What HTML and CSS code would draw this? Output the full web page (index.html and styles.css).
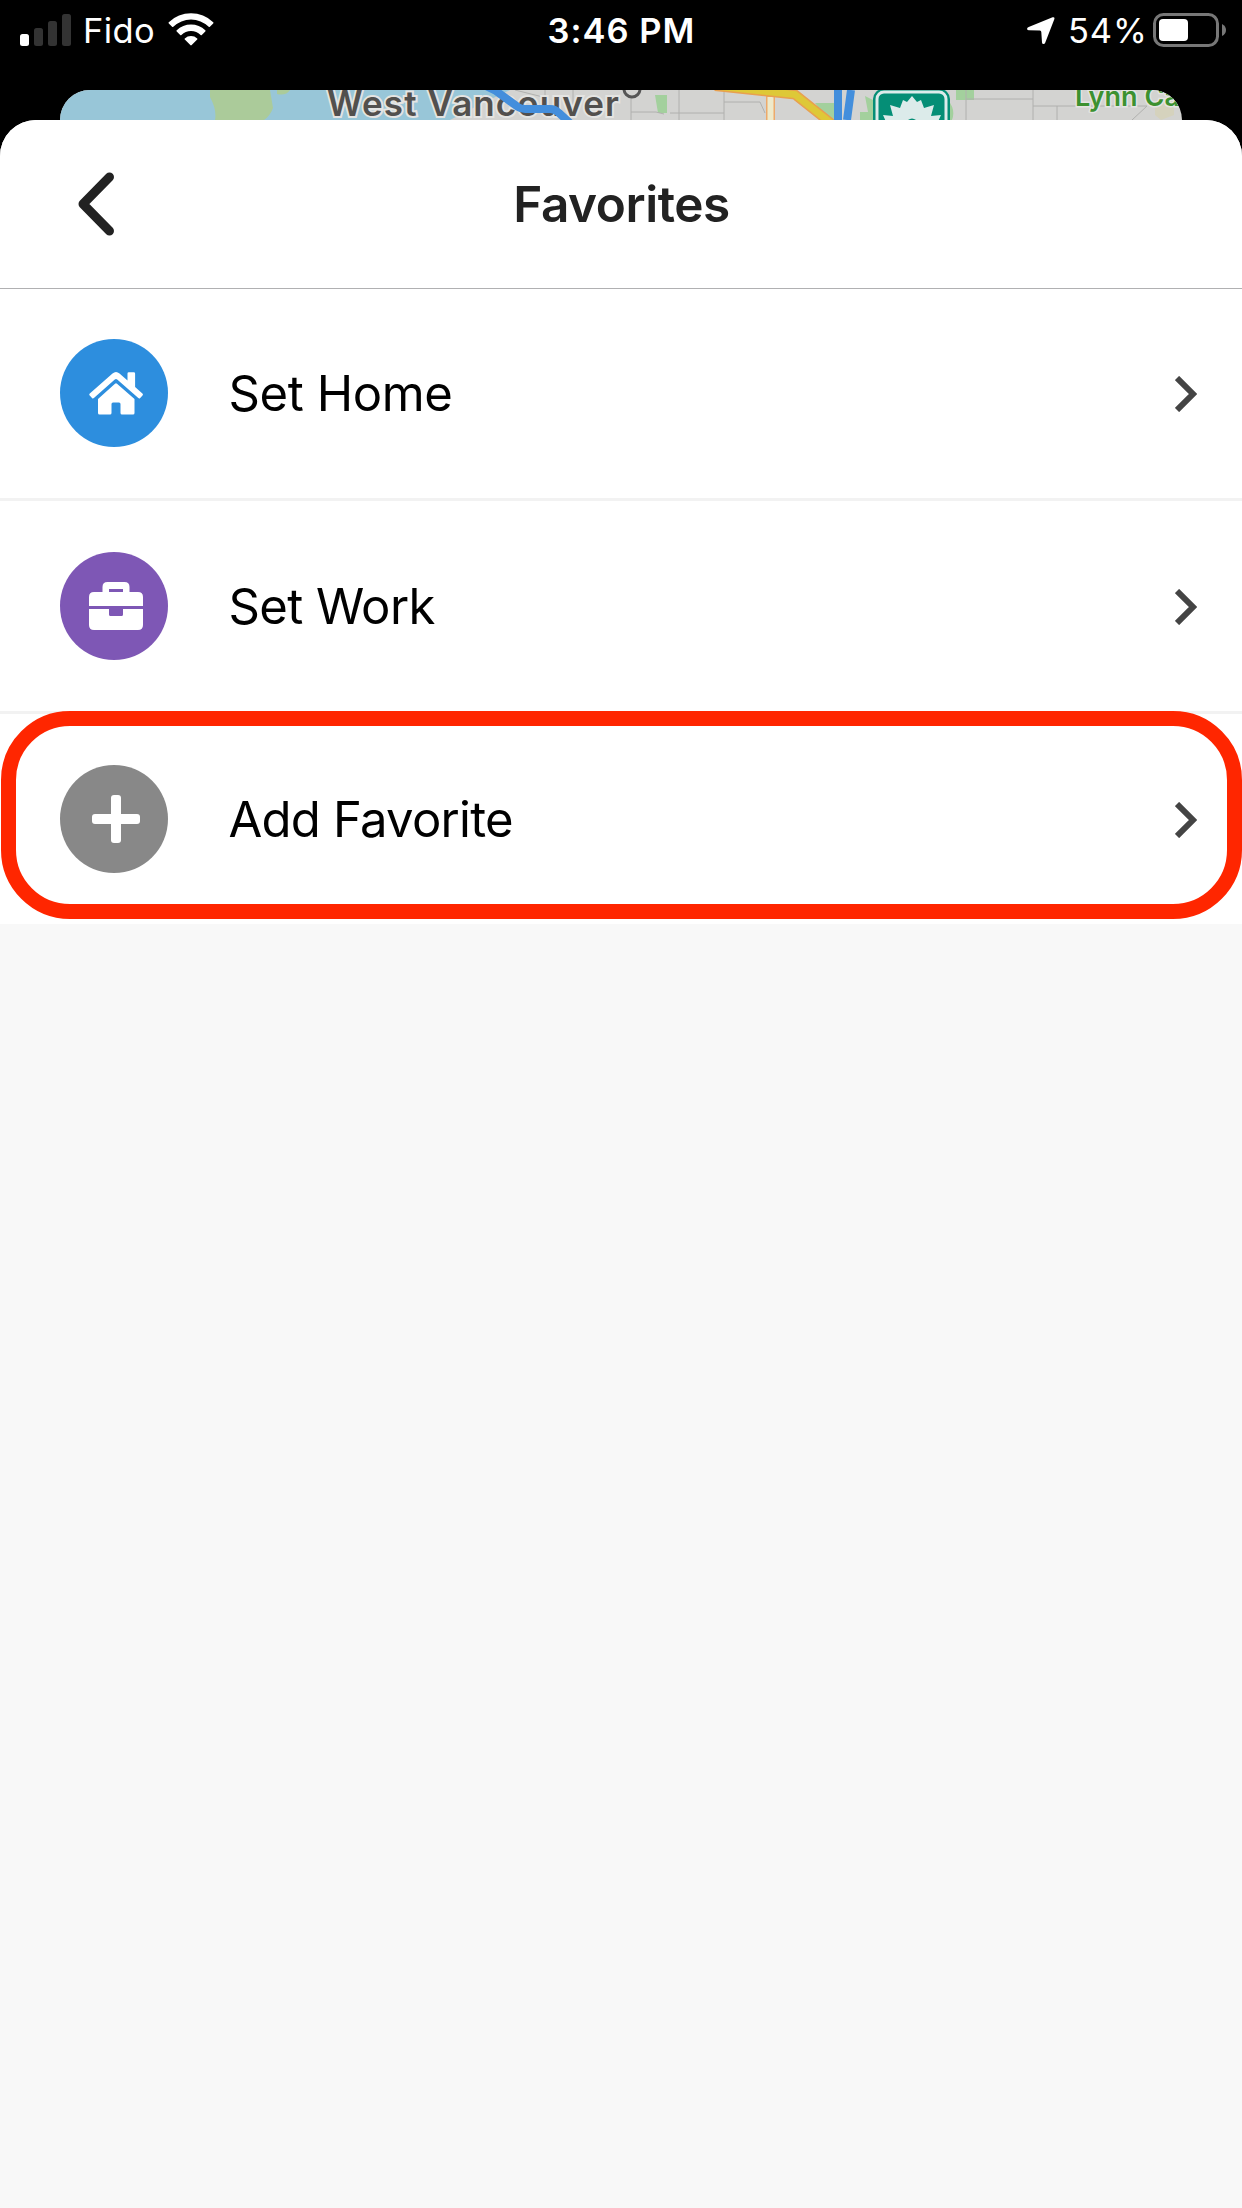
FILE: index.html
```html
<!DOCTYPE html>
<html lang="en">
<head>
<meta charset="utf-8">
<title>Favorites</title>
<link rel="stylesheet" href="styles.css">
</head>
<body>
<div class="screen">
  <div class="status">
    <div class="status-side">
      <svg class="signal" width="51" height="32" viewBox="0 0 51 32"><rect x="0" y="20" width="9" height="12" rx="2.5" fill="#fff"/><g fill="#333"><rect x="14" y="14" width="9" height="18" rx="2.5"/><rect x="28" y="7" width="9" height="25" rx="2.5"/><rect x="42" y="0" width="9" height="32" rx="2.5"/></g></svg>
      <span class="carrier">Fido</span>
      <svg class="wifi" width="46" height="34" viewBox="0 0 46 34" fill="#fff"><path d="M0.8 10.2a32 32 0 0 1 44.4 0q.6.6 0 1.2l-3.3 3.3q-.6.6-1.200 0a25.500 25.500 0 0 0-35.400 0q-.6.6-1.200 0l-3.300-3.300q-.6-.6 0-1.200z"/><path d="M8.700 18.200a20.600 20.600 0 0 1 28.600 0q.6.6 0 1.200l-3.500 3.500q-.6.6-1.200 0a14 14 0 0 0-19.200 0q-.6.6-1.200 0l-3.500-3.500q-.6-.6 0-1.200z"/><path d="M16.800 26.400a9.200 9.200 0 0 1 12.400 0q.6.6 0 1.200l-5.500 5.500q-.7.600-1.400 0l-5.500-5.500q-.6-.6 0-1.200z"/></svg>
    </div>
    <span class="time">3:46 PM</span>
    <div class="status-side status-right">
      <svg class="arrow" width="28" height="28" viewBox="0 0 28 28" fill="#fff"><path d="M25.600.3q2.400-.6 1.700 1.900L18.200 25.700q-.6 1.500-1.700 1.400-1.400 0-1.500-1.700L14.300 15q-.1-1.300-1.400-1.400L2 13.200Q.2 13.100.1 11.900 0 10.900 1.700 10.100z"/></svg>
      <span class="percent">54%</span>
      <svg class="battery" width="73" height="34" viewBox="0 0 73 34"><rect x="1.500" y="1.500" width="63" height="31" rx="9" fill="none" stroke="#777" stroke-width="3"/><rect x="6" y="6" width="29" height="22" rx="4" fill="#fff"/><path d="M69 11q4 2 4 6t-4 6z" fill="#777"/></svg>
    </div>
  </div>
  <div class="map">
    <svg width="1122" height="30" viewBox="60 90 1122 30">
      <rect x="60" y="90" width="1122" height="30" fill="#d3d3d1"/>
      <path d="M60 90H510Q478 105 450 120H60z" fill="#98c6d8"/>
      <path d="M210 90H270L273 108Q270 116 264 120H215Q217 110 210 97z" fill="#abcb9a"/>
      <path d="M277 90H290Q286 96 277 94z" fill="#abcb9a"/>
      <path d="M655 95h12v18h-9zM815 103h25v17h-12zM956 90h18v10h-18zM865 96l12 6v18h-17v-8h8zM948 100q8 10 4 20h-6z" fill="#a3d09d"/>
      <g fill="none" stroke="#b0b0ae" stroke-width="1"><path d="M515 90l32 8M545 90v14M573 90v26M631 90v30M679 90v30M724 90v30M631 112h25l8 2M670 113h54M724 102h36l5 11M966 90v30M966 99h67M1033 90v30M1033 106h24v14M1057 106h90l-15 14"/></g>
      <path d="M1155 104l19-5v16l-13 5-6-5z" fill="#d5d2bd"/>
      <g font-family="Inter, 'Liberation Sans', sans-serif">
        <text x="327" y="116" font-size="35" font-weight="600" textLength="292" fill="#52504e" stroke="#e4e4e2" stroke-width="4" paint-order="stroke">West Vancouver</text>
        <text x="1075" y="106" font-size="27" font-weight="600" textLength="105" fill="#3c9130" stroke="#e4e4e2" stroke-width="3" paint-order="stroke">Lynn Ca</text>
      </g>
      <circle cx="632" cy="89" r="8" fill="#d3d3d1" stroke="#555" stroke-width="3"/>
      <path d="M770.500 96v24" stroke="#edaa6b" stroke-width="9"/>
      <path d="M770.500 97v23" stroke="#eeeacb" stroke-width="6"/>
      <path d="M715 86l80 8.500L832 124" fill="none" stroke="#e8a04f" stroke-width="10"/>
      <path d="M715 86l80 8.500L832 124" fill="none" stroke="#dec837" stroke-width="7"/>
      <path d="M480 83l16 8 22 16q3 2 7 2h25q5 0 9 4l12 11" fill="none" stroke="#438edc" stroke-width="8"/>
      <path d="M838 90L838 120M851 90L847 120" stroke="#438edc" stroke-width="8"/>
      <rect x="873" y="89" width="77" height="44" rx="10" fill="#058e76"/>
      <rect x="877" y="92" width="69" height="44" rx="7" fill="none" stroke="#dcebea" stroke-width="3"/>
      <path d="M883 115l10 1-3-11 10 3 3-8 4 2 5-6 5 6 4-2 3 8 10-3-3 11 10-1-4 9h-50z" fill="#dcebea"/>
      <path d="M908 120q4-3 8 0z" fill="#058e76"/>
    </svg>
  </div>
  <main class="sheet">
    <header class="header">
      <svg class="back" width="36" height="64" viewBox="0 0 36 64"><path d="M31.500 5L5 32L31.500 59" fill="none" stroke="#222" stroke-width="9" stroke-linecap="round" stroke-linejoin="round"/></svg>
      <h1 class="title">Favorites</h1>
    </header>
    <ul class="list">
      <li class="row">
        <span class="badge home"><svg width="54" height="43" viewBox="0 0 54 43" fill="#fff"><path d="M.8 21.500L23.500 1.500q3.500-3 7 0L38.500 8.500V1.500Q38.500.2 39.800.2h5q1.300 0 1.300 1.300V15l7.300 6.500q1 .9.100 1.900l-2.300 2.500q-.9 1-1.900.1L28.200 7.600q-1.200-1-2.400 0L4.900 26q-1 .9-1.900-.1L.7 23.400q-.9-1 .1-1.900z"/><path d="M26 11.700q1-.9 2 0L45.500 27V41q0 1.500-1.500 1.500H33q-1.500 0-1.500-1.500V32q0-1.500-1.500-1.500h-6q-1.500 0-1.500 1.500v9q0 1.500-1.500 1.500H10.500Q9 42.500 9 41V27z"/></svg></span>
        <span class="label set-home">Set Home</span>
        <svg class="chevron" width="22" height="36" viewBox="0 0 22 36"><path d="M2 2L18 18L2 34" fill="none" stroke="#444" stroke-width="6"/></svg>
      </li>
      <li class="row">
        <span class="badge work"><svg width="54" height="48" viewBox="0 0 54 48" fill="#fff"><path fill-rule="evenodd" d="M13.500 10V5q0-5 5-5h17q5 0 5 5v5H49q5 0 5 5v9H0v-9q0-5 5-5zM20 7v3h14V7z"/><path d="M0 27h20v5.500q0 1.500 1.500 1.500h11q1.500 0 1.500-1.500V27h20v16q0 5-5 5H5q-5 0-5-5z"/></svg></span>
        <span class="label set-work">Set Work</span>
        <svg class="chevron" width="22" height="36" viewBox="0 0 22 36"><path d="M2 2L18 18L2 34" fill="none" stroke="#444" stroke-width="6"/></svg>
      </li>
      <li class="row highlighted">
        <span class="badge add"><svg width="48" height="48" viewBox="0 0 48 48" fill="#fff"><rect x="19" width="10" height="48" rx="3"/><rect y="19" width="48" height="10" rx="3"/></svg></span>
        <span class="label add-favorite">Add Favorite</span>
        <svg class="chevron" width="22" height="36" viewBox="0 0 22 36"><path d="M2 2L18 18L2 34" fill="none" stroke="#444" stroke-width="6"/></svg>
      </li>
    </ul>
  </main>
</div>
</body>
</html>
```
FILE: styles.css
```css
*, *::after { box-sizing: border-box; }
body { margin: 0; background: #000; font-family: Inter, "Liberation Sans", sans-serif; }
svg { display: block; flex: none; }
.screen { width: 1242px; height: 2208px; display: flex; flex-direction: column; background: #000; overflow: hidden; }
.status { height: 90px; padding: 0 16px 0 20px; display: grid; grid-template-columns: 1fr auto 1fr; align-items: start; color: #fff; font-size: 34.5px; line-height: 60px; white-space: nowrap; }
.status-side { display: flex; align-items: flex-start; }
.status-right { justify-content: flex-end; }
.signal { margin-top: 14px; }
.carrier { margin-left: 12px; width: 70px; padding-top: 1px; letter-spacing: 0.4px; }
.wifi { margin: 12px 0 0 15px; }
.time { font-weight: 600; padding: 1px 3px 0 0; letter-spacing: 1px; }
.arrow { margin-top: 17px; }
.percent { margin-left: 13px; width: 77px; padding-top: 1px; letter-spacing: 0.9px; }
.battery { margin: 13px 0 0 8px; }
.map { height: 30px; margin: 0 60px; border-radius: 30px 30px 0 0; overflow: hidden; }
.sheet { flex: 1; border-radius: 36px 36px 0 0; background: #f8f8f8; overflow: hidden; }
.header { position: relative; z-index: 1; height: 168px; padding: 0 77px 0 78px; display: grid; grid-template-columns: 36px 1fr 36px; align-items: center; background: #fff; box-shadow: 0 1px 0 #b0b0b2; }
.title { margin: 0; text-align: center; font-size: 49.5px; font-weight: 600; color: #222; letter-spacing: -0.45px; }
.list { margin: 0; padding: 0; list-style: none; }
.row { position: relative; height: 213px; padding: 0 45px 0 60px; display: flex; align-items: center; background: #fff; border-bottom: 3px solid #f2f2f2; }
.row:last-child { height: 210px; border-bottom: 0; }
.badge { width: 108px; height: 108px; border-radius: 50%; display: flex; align-items: center; justify-content: center; padding-left: 4px; }
.home { background: #2d8ede; }
.work { background: #7e57b5; }
.add { background: #888; }
.label { flex: 1; margin-left: 60.5px; font-size: 49px; color: #000; }
.set-home { letter-spacing: -0.4px; }
.set-work { letter-spacing: -0.6px; }
.add-favorite { letter-spacing: -0.75px; }
.chevron { margin-top: 2px; }
.highlighted::after { content: ""; position: absolute; left: 1px; right: 0; top: -3px; height: 208px; border: 15.500px solid #ff2600; border-radius: 69px; }
```
